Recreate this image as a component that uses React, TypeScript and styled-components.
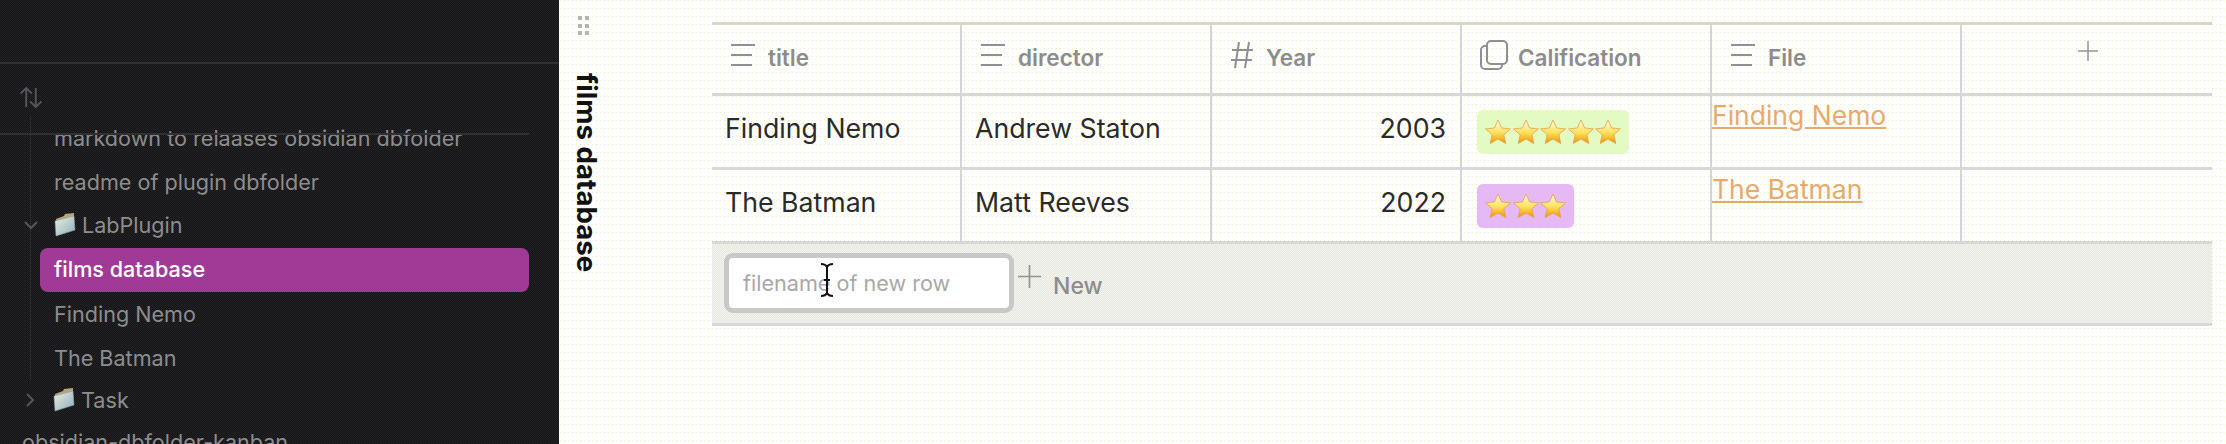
import styled, { createGlobalStyle } from 'styled-components';

const paper = `
  radial-gradient(circle at 0.5px 0.5px, #fff7a0 0.75px, transparent 0.75px) 0 0 / 8px 8px,
  radial-gradient(circle at 0.5px 0.5px, #fff7a0 0.75px, transparent 0.75px) 4px 4px / 8px 8px,
  radial-gradient(circle at 0.5px 0.5px, #dcdaf6 0.75px, transparent 0.75px) 4px 0 / 8px 8px,
  #ffffff
`;

const GlobalStyle = createGlobalStyle`
  html, body {
    margin: 0;
    height: 100%;
    overflow: hidden;
    font-family: Inter, "Noto Sans", sans-serif;
  }
`;

const films = [
  { title: 'Finding Nemo', director: 'Andrew Staton', year: 2003, stars: 5, tone: '#e3fbc2' },
  { title: 'The Batman', director: 'Matt Reeves', year: 2022, stars: 3, tone: '#e6b9f4' },
];

function LinesIcon() {
  return (
    <HeaderIcon viewBox="0 0 26 24" width="26" height="24">
      <path d="M1 2h24M1 12h21M1 22h21" fill="none" stroke="#8f8f92" strokeWidth="2" />
    </HeaderIcon>
  );
}

function HashIcon() {
  return (
    <HeaderIcon viewBox="0 0 24 28" width="24" height="28">
      <path d="M9 1 5 27M19 1l-4 26M2 9h21M1 19h21" fill="none" stroke="#8f8f92" strokeWidth="2" />
    </HeaderIcon>
  );
}

function CopyIcon() {
  return (
    <CopyGlyph viewBox="0 0 28 30" width="28" height="30">
      <rect x="7" y="1" width="20" height="23" rx="4" fill="none" stroke="#8f8f92" strokeWidth="2" />
      <path d="M7 6H5a4 4 0 0 0-4 4v15a4 4 0 0 0 4 4h13a4 4 0 0 0 4-4v-1" fill="none" stroke="#8f8f92" strokeWidth="2" />
    </CopyGlyph>
  );
}

function Star() {
  return (
    <svg viewBox="0 0 26 26" width="26" height="26">
      <path
        d="M13 1l3.6 8 8.9.9-6.7 5.8 2 8.8L13 20l-7.800 4.500 2-8.800L.5 9.900l8.900-.9z"
        fill="url(#star)"
        stroke="#e2a04a"
        strokeWidth="0.8"
      />
    </svg>
  );
}

function Folder() {
  return (
    <svg viewBox="0 0 22 24" width="22" height="24">
      <path d="M2 6l8-3 1-2 9-1v15l-16 6z" fill="#b9a77a" />
      <path d="M1 8l19-5 1 14-19 6z" fill="url(#folder)" stroke="#8b9aa0" strokeWidth="0.6" />
    </svg>
  );
}

function Plus({ size }: { size: number }) {
  return (
    <svg viewBox="0 0 24 24" width={size} height={size}>
      <path d="M12 0v24M0 12h24" stroke="#949494" strokeWidth="1.800" fill="none" />
    </svg>
  );
}

export default function App() {
  return (
    <Page>
      <GlobalStyle />
      <svg width="0" height="0" style={{ position: 'absolute' }}>
        <defs>
          <linearGradient id="star" x1="0" y1="0" x2="0" y2="1">
            <stop offset="0" stopColor="#fffde6" />
            <stop offset="0.55" stopColor="#ffe15a" />
            <stop offset="1" stopColor="#f09000" />
          </linearGradient>
          <linearGradient id="folder" x1="0" y1="0" x2="1" y2="1">
            <stop offset="0" stopColor="#e8eee2" />
            <stop offset="1" stopColor="#8fb0bd" />
          </linearGradient>
        </defs>
      </svg>

      <Sidebar>
        <TopBar />
        <SortBar>
          <svg viewBox="0 0 24 22" width="24" height="21">
            <path d="M7 21V1M1 7l6-6 6 6M17 1v20M11 15l6 6 6-6" fill="none" stroke="#55555a" strokeWidth="2" />
          </svg>
        </SortBar>
        <Tree>
          <Group>
            <FileRow>markdown to relaases obsidian dbfolder</FileRow>
            <FileRow>readme of plugin dbfolder</FileRow>
            <FolderRow>
              <Chevron viewBox="0 0 16 16" width="16" height="16">
                <path d="M2 5l6 6 6-6" />
              </Chevron>
              <Folder />
              LabPlugin
            </FolderRow>
            <FileRow $active>films database</FileRow>
            <FileRow>Finding Nemo</FileRow>
            <FileRow>The Batman</FileRow>
          </Group>
          <RootFolder>
            <Chevron viewBox="0 0 16 16" width="16" height="16">
              <path d="M5 2l6 6-6 6" />
            </Chevron>
            <Folder />
            Task
          </RootFolder>
          <RootFile>obsidian-dbfolder-kanban</RootFile>
        </Tree>
      </Sidebar>

      <Gutter>
        <DragHandle>
          {Array.from({ length: 6 }).map((_, i) => (
            <i key={i} />
          ))}
        </DragHandle>
        <NoteTitle>films database</NoteTitle>
      </Gutter>

      <Table>
        <HeaderRow>
          <HeaderCell>
            <LinesIcon />
            title
          </HeaderCell>
          <HeaderCell>
            <LinesIcon />
            director
          </HeaderCell>
          <HeaderCell>
            <HashIcon />
            Year
          </HeaderCell>
          <HeaderCell>
            <CopyIcon />
            Calification
          </HeaderCell>
          <HeaderCell>
            <LinesIcon />
            File
          </HeaderCell>
          <AddColumn>
            <Plus size={20} />
          </AddColumn>
        </HeaderRow>

        {films.map((film) => (
          <BodyRow key={film.title}>
            <TextCell>{film.title}</TextCell>
            <TextCell>{film.director}</TextCell>
            <NumberCell>{film.year}</NumberCell>
            <TagCell>
              <Tag $tone={film.tone}>
                {Array.from({ length: film.stars }).map((_, i) => (
                  <Star key={i} />
                ))}
              </Tag>
            </TagCell>
            <LinkCell>
              <FileLink href="#">{film.title}</FileLink>
            </LinkCell>
            <EmptyCell />
          </BodyRow>
        ))}

        <Footer>
          <InputWrap>
            <NewRowInput readOnly placeholder="filename of new row" />
            <IBeam viewBox="0 0 16 34" width="16" height="34">
              <path d="M2 1c3 0 5 1 6 3 1-2 3-3 6-3M8 4v26M2 33c3 0 5-1 6-3 1 2 3 3 6 3M5 17h6" fill="none" stroke="#111" strokeWidth="2" />
            </IBeam>
          </InputWrap>
          <AddRow>
            <Plus size={23} />
            <AddLabel>New</AddLabel>
          </AddRow>
        </Footer>
      </Table>
    </Page>
  );
}

const Page = styled.div`
  display: flex;
  width: 2226px;
  height: 444px;
  overflow: hidden;
  background: ${paper};
`;

const Sidebar = styled.aside`
  flex: 0 0 559px;
  height: 444px;
  overflow: hidden;
  background: repeating-conic-gradient(#141416 0 25%, #232326 0 50%) 0 0 / 2px 2px;
`;

const TopBar = styled.div`
  height: 62px;
  border-bottom: 2px solid #303032;
`;

const SortBar = styled.div`
  display: flex;
  height: 52px;
  padding: 23px 0 0 19px;
  box-sizing: border-box;
`;

const Tree = styled.div`
  position: relative;
  font-size: 21.600px;
  color: #8d8d8d;

  &::before {
    content: '';
    position: absolute;
    top: 17px;
    left: 0;
    width: 529px;
    height: 2px;
    background: #303032;
  }
`;

const Group = styled.div`
  margin-left: 30px;
  border-left: 1px solid #2a2a2d;
`;

const FileRow = styled.div<{ $active?: boolean }>`
  display: flex;
  align-items: center;
  width: 475px;
  height: ${(p) => (p.$active ? 41 : 44)}px;
  margin-left: 9px;
  padding: 0 0 ${(p) => (p.$active ? 3 : 0)}px 14px;
  border-radius: 8px;
  color: ${(p) => (p.$active ? '#fff' : 'inherit')};
  font-weight: ${(p) => (p.$active ? 500 : 400)};
  background: ${(p) =>
    p.$active
      ? 'repeating-conic-gradient(#a83a9c 0 25%, #983a92 0 50%) 0 0 / 2px 2px'
      : 'transparent'};
`;

const FolderRow = styled.div`
  display: flex;
  align-items: center;
  height: 42px;
  margin-bottom: 2px;
  gap: 6px;
`;

const Chevron = styled.svg`
  margin: 0 9px 0 -8px;
  fill: none;
  stroke: #55555a;
  stroke-width: 2;
`;

const RootFolder = styled(FolderRow)`
  height: 40px;
  margin-bottom: 0;
  padding-left: 30px;
`;

const RootFile = styled.div`
  display: flex;
  align-items: center;
  height: 44px;
  padding-left: 22px;
`;

const Gutter = styled.div`
  display: flex;
  flex-direction: column;
  flex: 0 0 153px;
  padding: 16px 0 0 19px;
  box-sizing: border-box;
`;

const DragHandle = styled.div`
  display: grid;
  grid-template-columns: 4px 4px;
  gap: 3.5px 3px;

  i {
    width: 4px;
    height: 4px;
    background: #b4b4b8;
  }
`;

const NoteTitle = styled.h1`
  align-self: flex-start;
  margin: 38px 0 0 -5px;
  writing-mode: vertical-rl;
  font-size: 27.700px;
  line-height: 28px;
  font-weight: 700;
  white-space: nowrap;
  color: #111;
`;

const Table = styled.div`
  width: 1500px;
  margin-top: 22px;
`;

const HeaderRow = styled.div`
  display: grid;
  grid-template-columns: repeat(6, 250px);
  height: 74px;
  box-sizing: border-box;
  border-top: 3px solid #d8d8ca;
  border-bottom: 3px solid #d7d7d7;
`;

const BodyRow = styled(HeaderRow)`
  height: 74px;
  border-top: 0;
`;

const HeaderCell = styled.div`
  display: flex;
  align-items: center;
  gap: 12px;
  padding: 0 0 4px 18px;
  border-right: 2px solid #d4d4d4;
  font-size: 22.500px;
  font-weight: 600;
  color: #8c8c8c;
`;

const HeaderIcon = styled.svg`
  flex: none;
  margin-bottom: 4px;
`;

const CopyGlyph = styled(HeaderIcon)`
  margin-right: -2px;
`;

const AddColumn = styled.div`
  display: flex;
  justify-content: center;
  padding: 16px 0 0 2px;
`;

const TextCell = styled.div`
  display: flex;
  align-items: center;
  padding: 0 0 8px 13px;
  border-right: 2px solid #d4d4d4;
  font-size: 26.700px;
  color: #2a2a2a;
`;

const NumberCell = styled(TextCell)`
  justify-content: flex-end;
  padding-right: 14px;
`;

const TagCell = styled(TextCell)`
  align-items: flex-start;
  padding: 14px 0 0 15px;
`;

const Tag = styled.span<{ $tone: string }>`
  display: flex;
  align-items: center;
  height: 44px;
  padding: 0 6px 0 8px;
  border-radius: 6px;
  background: ${(p) => p.$tone};

  svg {
    margin-right: 1.500px;
  }
`;

const LinkCell = styled(TextCell)`
  align-items: flex-start;
  padding: 0;
`;

const FileLink = styled.a`
  font-size: 26.500px;
  line-height: 38px;
  color: #e6aa6c;
`;

const EmptyCell = styled.div``;

const Footer = styled.div`
  display: flex;
  align-items: flex-start;
  height: 82px;
  box-sizing: border-box;
  padding: 9px 0 0 12px;
  border-bottom: 3px solid #d7d7d7;
  background: repeating-conic-gradient(#e8e8e2 0 25%, #f4f4ee 0 50%) 0 0 / 2px 2px;
`;

const InputWrap = styled.div`
  position: relative;
  display: flex;
`;

const NewRowInput = styled.input`
  width: 290px;
  height: 60px;
  box-sizing: border-box;
  padding: 0 0 0 14px;
  border: 5px solid #c8c8c8;
  border-radius: 9px;
  outline: none;
  background: #fff;
  font-family: Inter, sans-serif;
  font-size: 21.600px;

  &::placeholder {
    color: #a8a8a8;
  }
`;

const IBeam = styled.svg`
  position: absolute;
  left: 95px;
  top: 10px;
`;

const AddRow = styled.div`
  display: flex;
  align-items: flex-start;
  padding: 12px 0 0 4px;
`;

const AddLabel = styled.span`
  margin: 7px 0 0 12px;
  font-size: 23px;
  font-weight: 500;
  color: #8c8c8c;
`;
